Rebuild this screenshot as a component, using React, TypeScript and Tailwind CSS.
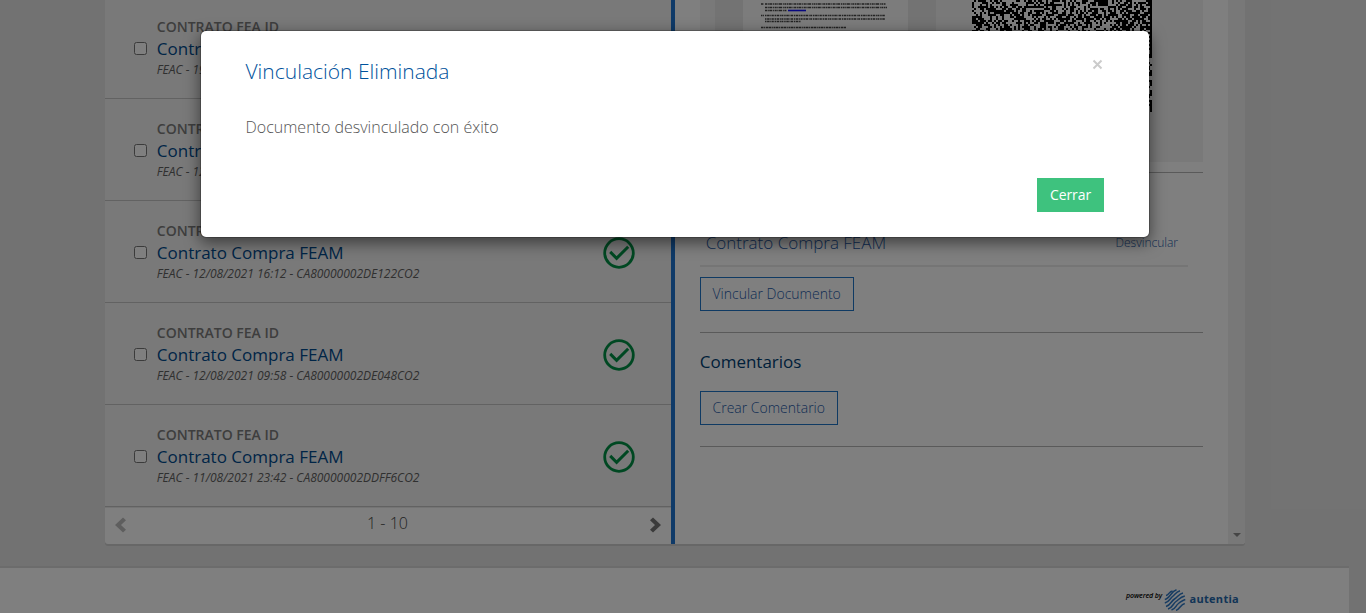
import React from 'react';

type Doc = { id: number; meta: string };

const docs: Doc[] = [
  { id: 1, meta: 'FEAC - 19' },
  { id: 2, meta: 'FEAC - 12' },
  { id: 3, meta: 'FEAC - 12/08/2021 16:12 - CA80000002DE122CO2' },
  { id: 4, meta: 'FEAC - 12/08/2021 09:58 - CA80000002DE048CO2' },
  { id: 5, meta: 'FEAC - 11/08/2021 23:42 - CA80000002DDFF6CO2' },
];

function CheckCircle() {
  return (
    <svg className="mt-[2px]" width="32" height="32" viewBox="0 0 32 32" fill="none" stroke="#009145" strokeWidth="2.8">
      <circle cx="16" cy="16" r="14.3" />
      <path d="M7.200 14.900L13.600 21.300L25.200 9.700" strokeWidth="3" />
    </svg>
  );
}

function DocRow({ doc }: { doc: Doc }) {
  return (
    <div className="flex h-[102px] shrink-0 items-center border-b border-[#c4c4c4] bg-[#f2f2f2] pl-[29px] pr-[36.5px]">
      <div className="mt-px size-[13px] rounded-[2.5px] border border-[#767676] bg-white" />
      <div className="ml-[9.8px] flex-1 whitespace-nowrap">
        <div className="h-[21px] text-[14px] leading-[20px] font-semibold text-[#7c7c7c]">CONTRATO FEA ID</div>
        <div className="h-[22px] text-[17px] leading-[22px] text-[#004a8e]">Contrato Compra FEAM</div>
        <div className="h-[19px] text-[12px] leading-[19px] text-[#606060] italic">{doc.meta}</div>
      </div>
      <CheckCircle />
    </div>
  );
}

function buildMatrix(): string {
  let seed = 20210812;
  let d = '';
  const cols = 90;
  const rows = 56;
  for (let y = 0; y < rows; y++) {
    for (let x = 0; x < cols; x++) {
      seed = (seed * 1103515 + 12345) % 2147483647;
      const dark = x === cols - 1 ? y < 29 || y > 49 || (y > 31 && y % 5 < 3) : (seed >> 9) % 100 < 53;
      if (dark) d += `M${x * 2} ${y * 2}h2v2h-2z`;
    }
  }
  return d;
}

const matrixPath = buildMatrix();

function Preview() {
  return (
    <div className="flex h-[162px] w-[503px] bg-[#f2f2f2] pl-[15px]">
      <div className="flex w-[221px] justify-center bg-[#e6e6e6]">
        <svg className="bg-[#f8f8f8]" width="165" height="162" viewBox="0 0 165 162" fill="none" stroke="#444" strokeWidth="1.7">
          <path d="M18 4h3M22 4h121M22 7.500h122M22 10.500h22" strokeDasharray="2 .6 1.200 .5 3 .8 1 .6" />
          <path d="M45 10.500h18" stroke="#1010ff" strokeWidth="1.6" />
          <path d="M18 15.500h3M22 15.500h120M22 19h120M22 21.500h36" strokeDasharray="1.500 .6 2.500 .7 1 .5 2 .8" />
          <path d="M18 27.500h85" strokeDasharray="2.500 .6 1.200 .7 2 .5" />
        </svg>
      </div>
      <svg className="ml-[36px] bg-[#fcfcfc]" width="180" height="112" viewBox="0 0 180 112" shapeRendering="crispEdges">
        <path d={matrixPath} fill="#000" />
      </svg>
    </div>
  );
}

function AutentiaMark() {
  return (
    <svg width="22" height="22" viewBox="0 0 22 22" fill="none" stroke="#2f78c4" strokeWidth="1.5">
      <path d="M2 6.500C5 6 5 2.500 8.500 2M.8 10.500C6 9.500 7 2.500 12.500 .8M.8 14C5 13 6 9.500 8.500 7.500S12 3 16 1.800M2 17.500C7 16 7 12 10.500 10S14.500 5 19 4M4 20C9 18.500 9 14.500 12 12.500S16 8 20.800 7M7.500 21C12 19.500 11.500 16.500 14.500 14.500S18 11.500 21.300 10.500M12 21.400C16 20 16.500 15.500 20.800 14.500" />
    </svg>
  );
}

function OutlineButton({ children }: { children: React.ReactNode }) {
  return (
    <button className="block h-[34px] border border-[#1e74c6] pr-[12.5px] pb-[2px] pl-[11.5px] text-[14px] font-light whitespace-nowrap text-[#1e5aa8]">
      {children}
    </button>
  );
}

export default function App() {
  return (
    <div className="relative h-[613px] w-[1366px] overflow-hidden bg-[#e5e5e5] font-['Open_Sans',sans-serif]">
      <main className="ml-[105px] flex h-[544px] w-[1140px] rounded-b-[3px] bg-white shadow-[0_2px_0_#cecece]">
        <section className="flex w-[566px] flex-col">
          <div className="flex h-[507px] flex-col justify-end overflow-hidden">
            {docs.map((doc) => (
              <DocRow key={doc.id} doc={doc} />
            ))}
          </div>
          <div className="flex h-[37px] items-center justify-between border-t border-[#e8e8e8] px-[10px] pb-[3px]">
            <svg width="12" height="16" viewBox="0 0 12 16" fill="#bdbdbd">
              <path d="M0 8L8 .5L11 3.300L6 8L11 12.700L8 15.500Z" />
            </svg>
            <span className="mb-[4px] -ml-px text-[16px] font-light text-[#444]">1 - 10</span>
            <svg width="12" height="16" viewBox="0 0 12 16" fill="#777">
              <path d="M12 8L4 .5L1 3.300L6 8L1 12.700L4 15.500Z" />
            </svg>
          </div>
        </section>
        <div className="w-[4px] bg-[#1e74d0]" />
        <section className="flex w-[553px] flex-col pl-[25px]">
          <Preview />
          <hr className="mt-[10px] w-[503px] border-[#b4b4b4]" />
          <div className="mt-[59px] flex h-[35px] w-[488px] items-start justify-between border-b-2 border-[#eaeaea] pr-[10px] pl-[6px] font-light text-[#1e5aa8]">
            <span className="-ml-[0.3px] text-[17px] leading-[22px]">Contrato Compra FEAM</span>
            <span className="text-[12px] leading-[21px]">Desvincular</span>
          </div>
          <div className="mt-[10px]">
            <OutlineButton>Vincular Documento</OutlineButton>
          </div>
          <hr className="mt-[21px] w-[503px] border-[#b4b4b4]" />
          <h2 className="-ml-[0.3px] mt-[18px] text-[17px] leading-[22px] text-[#003e75]">Comentarios</h2>
          <div className="mt-[18px]">
            <OutlineButton>Crear Comentario</OutlineButton>
          </div>
          <hr className="mt-[21px] w-[503px] border-[#b4b4b4]" />
        </section>
        <div className="flex w-[17px] items-end justify-center rounded-br-[3px] bg-[#f1f1f1] pb-[7px]">
          <svg width="8" height="4" viewBox="0 0 8 4" fill="#8a8a8a">
            <path d="M0 0h8L4 4z" />
          </svg>
        </div>
      </main>
      <footer className="mt-[22px] flex h-[47px] w-[1349px] items-start border-t-2 border-[#d8d8d8] bg-white pt-[21px] pl-[1126px]">
        <span className="mt-px w-[38px] text-[7px] leading-[11px] font-semibold tracking-[-0.1px] whitespace-nowrap text-black italic">powered by</span>
        <AutentiaMark />
        <span className="mt-px ml-[3.500px] text-[11px] leading-[17px] font-bold tracking-[0.3px] text-[#2569ad]">autentia</span>
      </footer>

      <div className="absolute inset-0 bg-black/50" />

      <div
        role="dialog"
        className="absolute top-[30px] left-[200px] flex h-[208px] w-[950px] flex-col rounded-[6px] border border-black/20 bg-white bg-clip-padding pr-[45px] pl-[44px] shadow-[0_5px_15px_rgba(0,0,0,0.5)]"
      >
        <div className="flex items-start justify-between pt-[26px]">
          <h1 className="ml-[0.5px] text-[21px] leading-[28px] font-light text-[#00529c]">Vinculación Eliminada</h1>
          <button aria-label="Cerrar ventana" className="mt-[2px] mr-[1px] flex size-[11px]">
            <svg width="11" height="11" viewBox="0 0 11 11" stroke="#cbcbcb" strokeWidth="2">
              <path d="M1.500 1.500L9.500 9.500M9.500 1.500L1.500 9.500" />
            </svg>
          </button>
        </div>
        <p className="mt-[30px] ml-[0.5px] text-[16px] leading-[24px] font-light text-[#555]">Documento desvinculado con éxito</p>
        <button className="mt-[39px] h-[34px] w-[67px] self-end bg-[#3ec27e] pb-[2px] text-[14px] tracking-[-0.1px] text-white">Cerrar</button>
      </div>
    </div>
  );
}
